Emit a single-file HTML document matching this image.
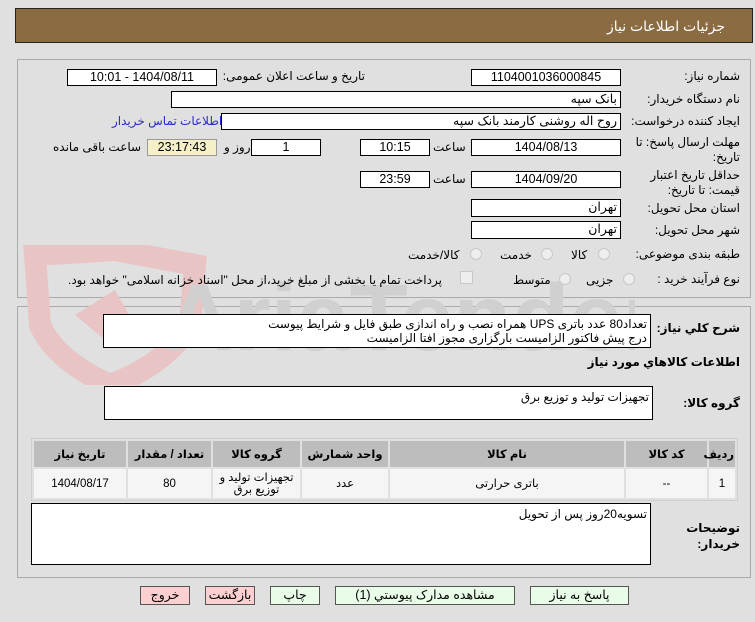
<!DOCTYPE html>
<html><head><meta charset="utf-8"><style>
body{margin:0;width:755px;height:622px;background:#e0e0e0;font-family:"Liberation Sans","DejaVu Sans",sans-serif;font-size:12px;color:#000;position:relative;overflow:hidden;direction:rtl}
.a{position:absolute}
.box{position:absolute;background:#fff;border:1px solid #000;box-sizing:border-box;text-align:center;font-size:12.5px;line-height:15px}
.lbl{position:absolute;font-size:12px;white-space:nowrap}
.ta{position:absolute;background:#fff;border:1px solid #000;box-sizing:border-box;text-align:right;padding:2px 3px;font-size:12px;line-height:16px}
.rad{position:absolute;width:12px;height:12px;border-radius:50%;border:1px solid #c8c8c8;background:#eee;box-sizing:border-box}
.btn{position:absolute;top:586px;height:19px;border:1px solid #555;box-sizing:border-box;text-align:center;font-size:12.5px;line-height:17px}
table{position:absolute;left:31px;top:438px;width:707px;border-collapse:separate;border-spacing:2px;background:#e0e0e0;border:1px solid #cfcfcf;table-layout:fixed}
th{background:#bdbdbd;height:24px;font-size:11.5px}
td{background:#f5f5f5;height:27px;text-align:center;font-size:11.5px;line-height:12px}
</style></head><body>
<div class="a" style="left:15px;top:8px;width:738px;height:35px;background:#8b6b42;border:1px solid #222;box-sizing:border-box"></div>
<div class="lbl" style="right:30px;top:18px;color:#fff;font-size:14px">جزئیات اطلاعات نیاز</div>
<div class="a" style="left:17px;top:59px;width:734px;height:239px;border:1px solid #aaa;box-sizing:border-box"></div>
<div class="a" style="left:17px;top:306px;width:734px;height:272px;border:1px solid #aaa;box-sizing:border-box"></div>
<svg class="a" style="left:15px;top:245px" width="620" height="140">
<path d="M20 10 L100 5 L180 20 L175 80 Q150 120 95 140 Q40 115 25 80 Z" fill="none" stroke="#e8c4c4" stroke-width="22"/>
<path d="M60 70 L100 45 L120 80 L90 95 Z" fill="#e8c4c4"/>
<text x="150" y="105" font-family="Liberation Sans" font-size="95" font-weight="bold" fill="#d0d0d0" direction="ltr">AriaTender.net</text>
</svg>
<div class="lbl" style="right:15px;top:69px">شماره نیاز:</div>
<div class="box" style="left:471px;top:69px;width:150px;height:17px">1104001036000845</div>
<div class="lbl" style="right:390px;top:69px">تاریخ و ساعت اعلان عمومی:</div>
<div class="box" style="left:67px;top:69px;width:150px;height:17px">1404/08/11 - 10:01</div>
<div class="lbl" style="right:15px;top:92px">نام دستگاه خریدار:</div>
<div class="box" style="left:171px;top:91px;width:450px;height:17px;text-align:right;padding-right:3px">بانک سپه</div>
<div class="lbl" style="right:15px;top:114px">ایجاد کننده درخواست:</div>
<div class="box" style="left:221px;top:113px;width:400px;height:17px;text-align:right;padding-right:3px">روح اله روشنی کارمند بانک سپه</div>
<div class="lbl" style="left:112px;top:114px;color:#2a2ad0">اطلاعات تماس خریدار</div>
<div class="lbl" style="right:15px;top:135px;line-height:15px">مهلت ارسال پاسخ: تا<br>تاریخ:</div>
<div class="box" style="left:471px;top:139px;width:150px;height:17px">1404/08/13</div>
<div class="lbl" style="left:433px;top:140px">ساعت</div>
<div class="box" style="left:360px;top:139px;width:70px;height:17px">10:15</div>
<div class="box" style="left:251px;top:139px;width:70px;height:17px">1</div>
<div class="lbl" style="left:224px;top:140px">روز و</div>
<div class="box" style="left:147px;top:139px;width:70px;height:17px;background:#f5f0c8;border-color:#999">23:17:43</div>
<div class="lbl" style="left:53px;top:140px">ساعت باقی مانده</div>
<div class="lbl" style="right:15px;top:168px;line-height:15px">حداقل تاریخ اعتبار<br>قیمت: تا تاریخ:</div>
<div class="box" style="left:471px;top:171px;width:150px;height:17px">1404/09/20</div>
<div class="lbl" style="left:433px;top:172px">ساعت</div>
<div class="box" style="left:360px;top:171px;width:70px;height:17px">23:59</div>
<div class="lbl" style="right:15px;top:201px">استان محل تحویل:</div>
<div class="box" style="left:471px;top:199px;width:150px;height:18px;text-align:right;padding-right:3px">تهران</div>
<div class="lbl" style="right:15px;top:223px">شهر محل تحویل:</div>
<div class="box" style="left:471px;top:221px;width:150px;height:18px;text-align:right;padding-right:3px">تهران</div>
<div class="lbl" style="right:15px;top:247px">طبقه بندی موضوعی:</div>
<div class="rad" style="left:598px;top:248px"></div><div class="lbl" style="left:571px;top:248px">کالا</div>
<div class="rad" style="left:541px;top:248px"></div><div class="lbl" style="left:500px;top:248px">خدمت</div>
<div class="rad" style="left:470px;top:248px"></div><div class="lbl" style="left:408px;top:248px">کالا/خدمت</div>
<div class="lbl" style="right:15px;top:272px">نوع فرآیند خرید :</div>
<div class="rad" style="left:623px;top:273px"></div><div class="lbl" style="left:586px;top:273px">جزیی</div>
<div class="rad" style="left:559px;top:273px"></div><div class="lbl" style="left:513px;top:273px">متوسط</div>
<div class="a" style="left:460px;top:271px;width:11px;height:11px;border:1px solid #c8c8c8;background:#eee"></div>
<div class="lbl" style="left:68px;top:273px">پرداخت تمام یا بخشی از مبلغ خرید،از محل "اسناد خزانه اسلامی" خواهد بود.</div>
<div class="lbl" style="right:15px;top:321px;font-weight:bold">شرح کلي نياز:</div>
<div class="ta" style="left:103px;top:314px;width:548px;height:34px;line-height:14px;font-size:12px">تعداد80 عدد باتری UPS  همراه نصب و راه اندازی طبق فایل و شرایط پیوست<br>درج پیش فاکتور الزامیست بارگزاری مجوز افتا الزامیست</div>
<div class="lbl" style="right:15px;top:355px;font-weight:bold">اطلاعات کالاهاي مورد نياز</div>
<div class="lbl" style="right:15px;top:396px;font-weight:bold">گروه کالا:</div>
<div class="ta" style="left:104px;top:386px;width:549px;height:34px">تجهیزات تولید و توزیع برق</div>
<table><tr><th style="width:24px">ردیف</th><th style="width:79px">کد کالا</th><th style="width:232px">نام کالا</th><th style="width:84px">واحد شمارش</th><th style="width:85px">گروه کالا</th><th style="width:81px">تعداد / مقدار</th><th>تاریخ نیاز</th></tr>
<tr><td>1</td><td>--</td><td>باتری حرارتی</td><td>عدد</td><td>تجهیزات تولید و توزیع برق</td><td>80</td><td>1404/08/17</td></tr></table>
<div class="lbl" style="right:15px;top:520px;font-weight:bold;line-height:16px">توضیحات<br>خریدار:</div>
<div class="ta" style="left:31px;top:503px;width:620px;height:62px">تسویه20روز پس از تحویل</div>
<div class="btn" style="left:530px;width:99px;background:#e8fce8">پاسخ به نیاز</div>
<div class="btn" style="left:335px;width:180px;background:#e8fce8">مشاهده مدارک پیوستي (1)</div>
<div class="btn" style="left:270px;width:50px;background:#e8fce8">چاپ</div>
<div class="btn" style="left:205px;width:50px;background:#fcd0d0">بازگشت</div>
<div class="btn" style="left:140px;width:50px;background:#fcd0d0">خروج</div>
</body></html>
